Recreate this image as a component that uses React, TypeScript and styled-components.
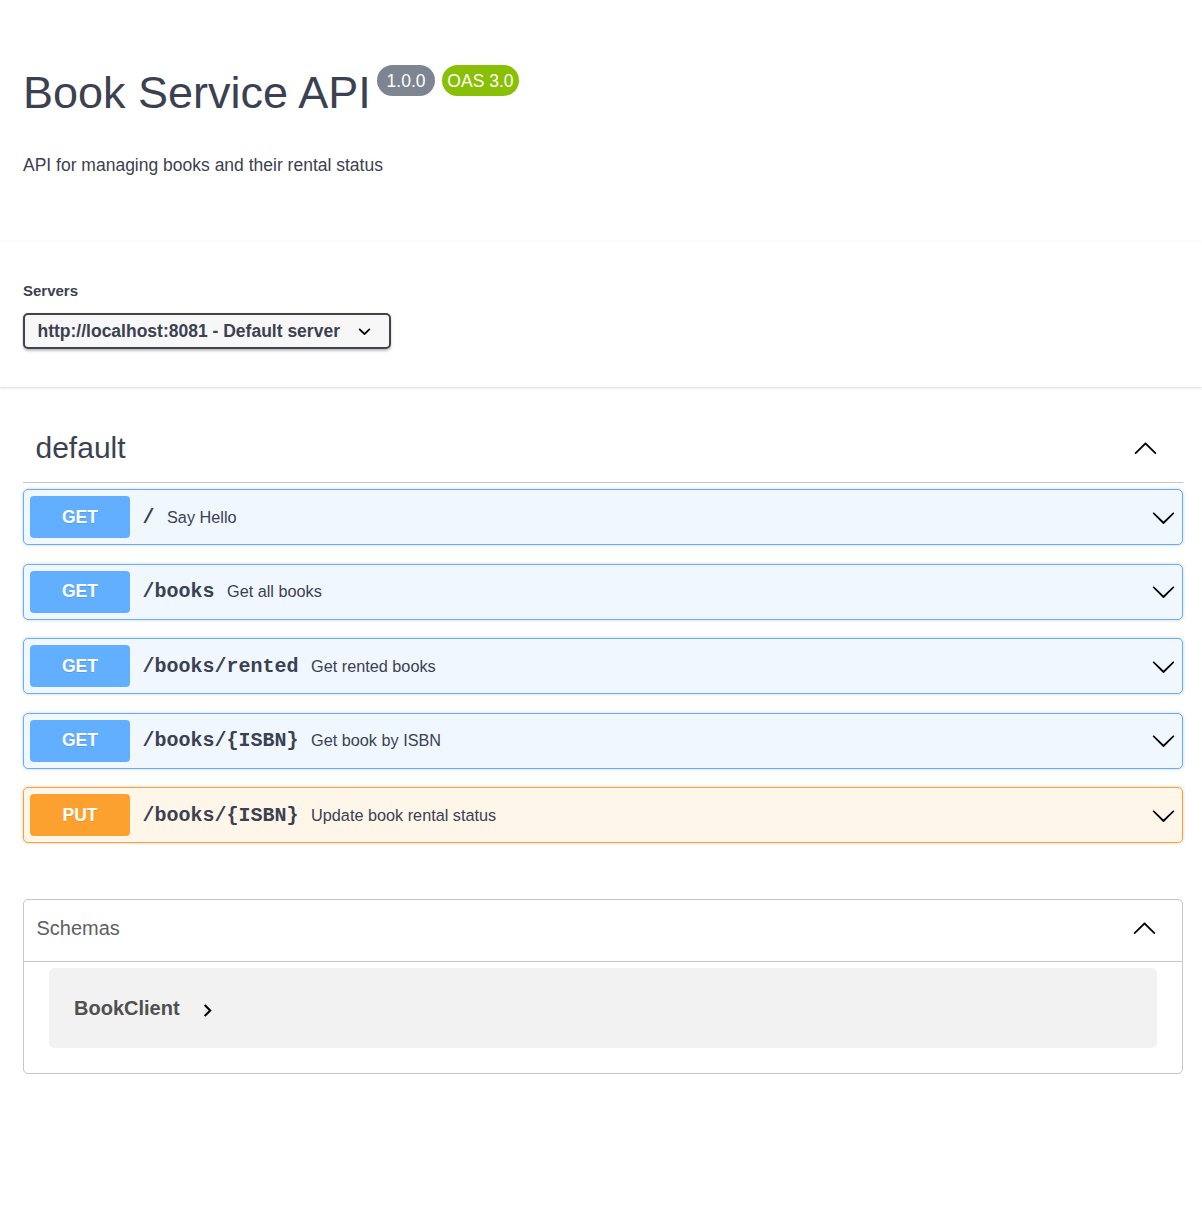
import React from "react";
import styled, { createGlobalStyle } from "styled-components";

const GlobalStyle = createGlobalStyle`
  html, body { margin: 0; padding: 0; background: #fff; }
  body {
    font-family: "Liberation Sans", Arial, sans-serif;
    color: #3b4151;
  }
  * { box-sizing: border-box; }
`;

const Page = styled.div`
  width: 1202px;
  min-height: 1222px;
  background: #fff;
`;

const InfoSection = styled.section`
  padding: 67px 19px 66px 23px;
`;

const TitleRow = styled.div`
  display: flex;
  align-items: flex-start;
`;

const Title = styled.h2`
  margin: 0;
  font-size: 45px;
  line-height: 52px;
  font-weight: 400;
  color: #3b4151;
`;

const Badges = styled.div`
  display: flex;
  gap: 7px;
  margin: -2px 0 0 6px;
`;

const Badge = styled.span<{ $bg: string }>`
  display: inline-block;
  background: ${(p) => p.$bg};
  color: #fff;
  border-radius: 57px;
  padding: 2.5px 5px;
  font-size: 17.5px;
  line-height: 26px;
  white-space: pre;
`;

const Description = styled.p`
  margin: 36px 0 0;
  font-size: 17.5px;
  line-height: 20px;
  color: #3b4151;
`;

const ServersSection = styled.section`
  padding: 41px 19px 38px 23px;
  margin-bottom: 25px;
  background: #fff;
  box-shadow: 0 1.25px 2.5px 0 rgba(0, 0, 0, 0.15);
`;

const ServersLabel = styled.div`
  font-size: 15px;
  line-height: 17px;
  font-weight: 700;
  margin-bottom: 14px;
  color: #3b4151;
`;

const ServerSelect = styled.div`
  display: flex;
  align-items: center;
  justify-content: space-between;
  width: 368px;
  height: 36px;
  padding: 0 12.5px;
  border: 2px solid #41444e;
  border-radius: 5px;
  background: #f7f7f7;
  box-shadow: 0 1.25px 2.5px 0 rgba(0, 0, 0, 0.25);
  font-size: 17.5px;
  font-weight: 700;
  color: #3b4151;
`;

const Main = styled.main`
  padding: 0 19px 0 23px;
`;

const TagHeader = styled.div`
  display: flex;
  align-items: center;
  justify-content: space-between;
  padding: 12.5px 25px 12.5px 12.5px;
  border-bottom: 1px solid rgba(59, 65, 81, 0.3);
  margin-bottom: 6px;
`;

const TagTitle = styled.h3`
  margin: 0;
  font-size: 30px;
  line-height: 45px;
  font-weight: 400;
  color: #3b4151;
`;

const OpList = styled.div`
  display: flex;
  flex-direction: column;
  gap: 18.5px;
`;

const Opblock = styled.div<{ $color: string; $bg: string }>`
  display: flex;
  align-items: center;
  height: 56px;
  padding: 6px;
  border: 1px solid ${(p) => p.$color};
  border-radius: 5px;
  background: ${(p) => p.$bg};
  box-shadow: 0 0 3.75px rgba(0, 0, 0, 0.19);
`;

const Method = styled.span<{ $color: string }>`
  display: flex;
  align-items: center;
  justify-content: center;
  flex: 0 0 100px;
  height: 42px;
  border-radius: 4px;
  background: ${(p) => p.$color};
  color: #fff;
  font-size: 17.5px;
  font-weight: 700;
  text-shadow: 0 1px 0 rgba(0, 0, 0, 0.1);
`;

const PathText = styled.span`
  padding: 0 12.5px;
  font-family: "Liberation Mono", "Courier New", monospace;
  font-weight: 700;
  font-size: 20px;
  color: #3b4151;
`;

const Summary = styled.span`
  flex: 1;
  font-size: 16.25px;
  color: #3b4151;
`;

const ArrowSvg = styled.svg`
  flex: 0 0 25px;
  width: 25px;
  height: 25px;
  fill: #000;
`;

const Models = styled.section`
  margin: 56px 0 37.5px;
  border: 1px solid rgba(59, 65, 81, 0.3);
  border-radius: 5px;
`;

const ModelsHeader = styled.div`
  display: flex;
  align-items: center;
  justify-content: space-between;
  padding: 9.5px 25px 15.5px 12.5px;
  border-bottom: 1px solid rgba(59, 65, 81, 0.3);
`;

const ModelsTitle = styled.h4`
  margin: 0;
  font-size: 20px;
  line-height: 36px;
  font-weight: 400;
  color: #606060;
`;

const ModelContainer = styled.div`
  display: flex;
  align-items: center;
  height: 80px;
  margin: 6px 25px 25px;
  padding: 0 25px;
  border-radius: 5px;
  background: rgba(0, 0, 0, 0.05);
`;

const ModelTitle = styled.span`
  font-size: 20px;
  font-weight: 700;
  color: #505050;
`;

const ToggleSvg = styled.svg`
  width: 25px;
  height: 25px;
  margin-left: 15px;
  margin-top: 4px;
  fill: #000;
`;

const SelectChevron = styled.svg`
  width: 25px;
  height: 25px;
  fill: #000;
`;

const ArrowDown = () => (
  <ArrowSvg viewBox="0 0 20 20">
    <path d="M17.418 6.109c.272-.268.709-.268.979 0s.271.701 0 .969l-7.908 7.83c-.27.268-.707.268-.979 0l-7.908-7.83c-.27-.268-.27-.701 0-.969.271-.268.709-.268.979 0L10 13.25l7.418-7.141z" />
  </ArrowSvg>
);

const ArrowUp = () => (
  <ArrowSvg viewBox="0 0 20 20">
    <path d="M17.418 14.908c.272.268.709.268.979 0s.271-.701 0-.969l-7.908-7.83c-.27-.268-.707-.268-.979 0l-7.908 7.83c-.27.268-.27.701 0 .969.271.268.709.268.979 0L10 7.771l7.418 7.137z" />
  </ArrowSvg>
);

type Op = { method: "GET" | "PUT"; path: string; summary: string };

const ops: Op[] = [
  { method: "GET", path: "/", summary: "Say Hello" },
  { method: "GET", path: "/books", summary: "Get all books" },
  { method: "GET", path: "/books/rented", summary: "Get rented books" },
  { method: "GET", path: "/books/{ISBN}", summary: "Get book by ISBN" },
  { method: "PUT", path: "/books/{ISBN}", summary: "Update book rental status" },
];

const methodColors = {
  GET: { color: "#61affe", bg: "#f0f7ff" },
  PUT: { color: "#fca130", bg: "#fff6ea" },
};

export default function App() {
  return (
    <Page>
      <GlobalStyle />
      <InfoSection>
        <TitleRow>
          <Title>Book Service API</Title>
          <Badges>
            <Badge $bg="#7d8492">{" 1.0.0 "}</Badge>
            <Badge $bg="#89bf04">OAS 3.0</Badge>
          </Badges>
        </TitleRow>
        <Description>API for managing books and their rental status</Description>
      </InfoSection>

      <ServersSection>
        <ServersLabel>Servers</ServersLabel>
        <ServerSelect>
          <span>http://localhost:8081 - Default server</span>
          <SelectChevron viewBox="0 0 20 20">
            <path d="M13.418 7.859a.695.695 0 01.978 0 .68.68 0 010 .969l-3.908 3.83a.697.697 0 01-.979 0l-3.908-3.83a.68.68 0 010-.969.695.695 0 01.978 0L10 11l3.418-3.141z" />
          </SelectChevron>
        </ServerSelect>
      </ServersSection>

      <Main>
        <TagHeader>
          <TagTitle>default</TagTitle>
          <ArrowUp />
        </TagHeader>
        <OpList>
          {ops.map((op, i) => {
            const c = methodColors[op.method];
            return (
              <Opblock key={i} $color={c.color} $bg={c.bg}>
                <Method $color={c.color}>{op.method}</Method>
                <PathText>{op.path}</PathText>
                <Summary>{op.summary}</Summary>
                <ArrowDown />
              </Opblock>
            );
          })}
        </OpList>

        <Models>
          <ModelsHeader>
            <ModelsTitle>Schemas</ModelsTitle>
            <ArrowUp />
          </ModelsHeader>
          <ModelContainer>
            <ModelTitle>BookClient</ModelTitle>
            <ToggleSvg viewBox="0 0 24 24">
              <path d="M10 6L8.59 7.41 13.17 12l-4.58 4.59L10 18l6-6z" />
            </ToggleSvg>
          </ModelContainer>
        </Models>
      </Main>
    </Page>
  );
}
